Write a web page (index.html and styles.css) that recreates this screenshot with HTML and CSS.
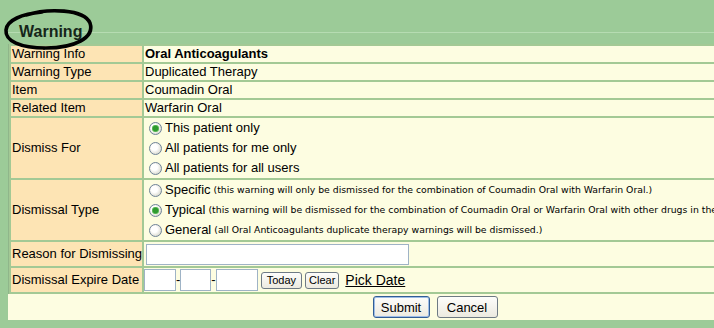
FILE: index.html
```
<!DOCTYPE html>
<html lang="en">

<head>
    <meta charset="UTF-8">
    <title>Warning</title>
    <link rel="stylesheet" href="styles.css">
</head>

<body>
    <div class="page">
        <!-- hand drawn mark round the title -->
        <svg class="mark" width="100" height="56" viewBox="0 0 100 56">
            <path d="M26 15 C48 8 84 9 90 23 C95 38 74 48 46 48 C20 48 5 41 6 30 C7 20 22 14 42 12"
                fill="none" stroke="#000" stroke-width="3.6" stroke-linecap="round" />
        </svg>
        <h1 class="heading">Warning</h1>

        <div class="panel">
            <table class="form">
                <tr>
                    <td class="label">Warning Info</td>
                    <td class="value"><b>Oral Anticoagulants</b></td>
                </tr>
                <tr>
                    <td class="label">Warning Type</td>
                    <td class="value">Duplicated Therapy</td>
                </tr>
                <tr>
                    <td class="label">Item</td>
                    <td class="value">Coumadin Oral</td>
                </tr>
                <tr>
                    <td class="label">Related Item</td>
                    <td class="value">Warfarin Oral</td>
                </tr>
                <tr>
                    <td class="label">Dismiss For</td>
                    <td class="value">
                        <label class="opt"><input type="radio" name="for" checked>This patient only</label>
                        <label class="opt"><input type="radio" name="for">All patients for me only</label>
                        <label class="opt"><input type="radio" name="for">All patients for all users</label>
                    </td>
                </tr>
                <tr>
                    <td class="label">Dismissal Type</td>
                    <td class="value">
                        <label class="opt"><input type="radio" name="type">Specific <span class="note">(this warning will only be dismissed for the combination of Coumadin Oral with Warfarin Oral.)</span></label>
                        <label class="opt"><input type="radio" name="type" checked>Typical <span class="note">(this warning will be dismissed for the combination of Coumadin Oral or Warfarin Oral with other drugs in the same class.)</span></label>
                        <label class="opt"><input type="radio" name="type">General <span class="note">(all Oral Anticoagulants duplicate therapy warnings will be dismissed.)</span></label>
                    </td>
                </tr>
                <tr class="tall">
                    <td class="label">Reason for Dismissing</td>
                    <td class="value"><input type="text" class="field reason"></td>
                </tr>
                <tr class="tall">
                    <td class="label">Dismissal Expire Date</td>
                    <td class="value">
                        <div class="date">
                            <input type="text" class="field mm">-<input type="text" class="field dd">-<input type="text" class="field yy">
                            <button class="btn small">Today</button>
                            <button class="btn small tight">Clear</button>
                            <a href="#" class="pick">Pick Date</a>
                        </div>
                    </td>
                </tr>
            </table>
            <div class="actions">
                <button class="btn primary">Submit</button>
                <button class="btn">Cancel</button>
            </div>
        </div>
    </div>
</body>

</html>
```

FILE: styles.css
```
* {
    margin: 0;
    padding: 0;
    box-sizing: border-box;
}

html,
body {
    overflow: hidden;
}

body {
    background: #9ccb98;
    font-family: "Liberation Sans", Arial, sans-serif;
    font-size: 13px;
    color: #000;
}

.page {
    position: relative;
    padding: 20px 0 0 8px;
    width: 870px;
}

.mark {
    position: absolute;
    left: 0;
    top: 0;
}

.heading {
    height: 24px;
    line-height: 24px;
    padding-left: 11px;
    font-size: 16px;
    font-weight: bold;
    color: #15261a;
    /* thin light rule across the title bar */
    background: linear-gradient(#9ccb98 0 12px, #b6dcb2 12px 13px, #9ccb98 13px);
}

.panel {
    background: #fdfde1;
    width: 854px;
}

.form {
    width: 100%;
    border-collapse: separate;
    border-spacing: 2px;
    background: #a3c995;
    border-left: 1px solid #8fb68a;
}

.form td {
    height: 16px;
    line-height: 16px;
    padding: 0 0 0 1px;
    vertical-align: middle;
    white-space: nowrap;
}

.label {
    width: 131px;
    min-width: 131px;
    max-width: 131px;
    background: #fde4b4;
}

.value {
    background: #fdfde1;
}

.tall td {
    height: 24px;
}

.opt {
    display: flex;
    align-items: center;
    height: 20px;
}

.opt input {
    appearance: none;
    width: 13px;
    height: 13px;
    margin: 0 3px 0 4px;
    border: 1px solid #6e8398;
    border-radius: 50%;
    background: radial-gradient(circle at 40% 40%, #fff 0 3px, #dcdcd2 7px);
}

.opt input:checked {
    background:
        radial-gradient(circle, #2f9a2f 0 2.5px, #7fcf7a 3.5px, transparent 4px),
        radial-gradient(circle at 40% 40%, #fff 0 3px, #dcdcd2 7px);
}

.note {
    font-family: "DejaVu Sans", Verdana, sans-serif;
    font-size: 9.3px;
    margin-left: 3px;
}

.field {
    height: 22px;
    border: 1px solid #9fb3c6;
    background: #fff;
    font: inherit;
}

.reason {
    width: 263px;
    height: 21px;
    margin-left: 1px;
}

.date {
    display: flex;
    align-items: center;
}

.mm {
    width: 32px;
    margin-left: -1px;
}

.dd {
    width: 31px;
}

.yy {
    width: 42px;
}

.btn {
    font-family: "Liberation Sans", Arial, sans-serif;
    font-size: 13px;
    height: 22px;
    padding: 0 9px;
    border: 1px solid #6e7a84;
    border-radius: 3px;
    background: linear-gradient(#fdfdfb, #eceae0);
    color: #000;
}

.btn.small {
    height: 17px;
    font-size: 11px;
    padding: 0 5px;
    margin-left: 3px;
}

.btn.tight {
    padding: 0 3px;
}

.pick {
    margin-left: 6px;
    color: #000;
    font-size: 14px;
}

.btn.primary {
    border-color: #325e96;
    box-shadow: inset 0 0 0 1px #9ebde6;
}

.actions {
    height: 26px;
    display: flex;
    justify-content: center;
    align-items: center;
    gap: 7px;
}

.actions .btn {
    width: 57px;
    padding: 0;
}

.actions .btn+.btn {
    width: 61px;
}
```
